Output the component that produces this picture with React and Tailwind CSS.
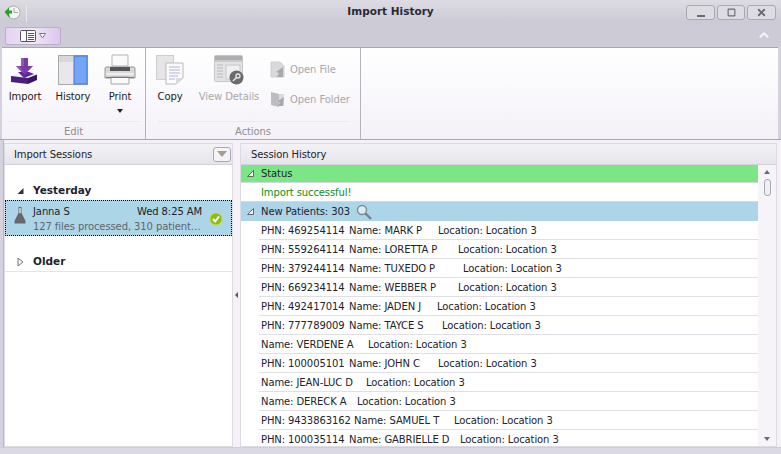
import React from 'react'
import { Square, X, ChevronUp } from 'lucide-react'

const font = { fontFamily: 'Tahoma, "DejaVu Sans", sans-serif' }

// phn column / name column widths follow the reference's uneven padding
const rows = [
  { phn: 'PHN: 469254114', name: 'Name: MARK P', nameW: 'w-[89px]' },
  { phn: 'PHN: 559264114', name: 'Name: LORETTA P', nameW: 'w-[109px]' },
  { phn: 'PHN: 379244114', name: 'Name: TUXEDO P', nameW: 'w-[114px]' },
  { phn: 'PHN: 669234114', name: 'Name: WEBBER P', nameW: 'w-[109px]' },
  { phn: 'PHN: 492417014', name: 'Name: JADEN J', nameW: 'w-[88px]' },
  { phn: 'PHN: 777789009', name: 'Name: TAYCE S', nameW: 'w-[93px]' },
  { name: 'Name: VERDENE A', nameW: 'w-[107px]' },
  { phn: 'PHN: 100005101', name: 'Name: JOHN C', nameW: 'w-[89px]' },
  { name: 'Name: JEAN-LUC D', nameW: 'w-[105px]' },
  { name: 'Name: DERECK A', nameW: 'w-[96px]' },
  { phn: 'PHN: 9433863162', phnW: 'w-[93px]', name: 'Name: SAMUEL T', nameW: 'w-[100px]' },
  { phn: 'PHN: 100035114', name: 'Name: GABRIELLE D', nameW: 'w-[111px]' },
]

function ImportIcon() {
  return (
    <svg width="30" height="28" viewBox="0 0 30 28">
      <path d="M1 19 L12 15 L29 17 L18 22 L1 21 Z" fill="#f4f0f8" />
      <path d="M1 19 L18 21 V27 L1 25 Z" fill="#4a1f80" />
      <path d="M18 21 L27 17.5 V23 L18 27 Z" fill="#3a1566" />
      <path d="M8 15 L14 21 L24 17 L19 15 Z" fill="#5b2a94" />
      <path d="M11 1 H18 V9 H23 L14.5 18 L6 9 H11 Z" fill="#7a3aa8" />
      <path d="M11 1 H14 V9 H9 L14.5 16 L6 9 H11 Z" fill="#9258bd" />
    </svg>
  )
}

function HistoryIcon() {
  return (
    <svg width="30" height="30" viewBox="0 0 30 30">
      <rect x="0.5" y="0.5" width="29" height="29" fill="#e9e7ea" stroke="#a9a9ad" />
      <rect x="1" y="1" width="14" height="6" fill="#d9d7da" />
      <rect x="16" y="1" width="13" height="28" fill="#76a5f5" stroke="#3f78e0" />
    </svg>
  )
}

function PrintIcon() {
  return (
    <svg width="32" height="31" viewBox="0 0 32 31">
      <path d="M8 1 H24 V12 H8 Z" fill="#fafafa" stroke="#b5b5b5" />
      <path d="M2 13 H30 Q31 13 31 15 V24 H1 V15 Q1 13 2 13 Z" fill="#d8d8d8" stroke="#9a9a9a" />
      <rect x="6" y="13" width="20" height="4" fill="#55565a" />
      <rect x="2" y="19" width="28" height="2" fill="#efefef" />
      <path d="M7 23 H25 V30 H7 Z" fill="#fafafa" stroke="#a5a5a5" />
      <rect x="2" y="23" width="28" height="1" fill="#77787c" />
    </svg>
  )
}

function CopyIcon() {
  return (
    <svg width="28" height="30" viewBox="0 0 28 30">
      <rect x="0.5" y="0.5" width="17" height="24" fill="#e6e4e6" stroke="#cfcdd0" />
      <path d="M10 8 H27 V23 L20 29 H10 Z" fill="#fbfbfd" stroke="#b9b9bd" />
      <path d="M13 12 H24 M13 15 H24 M13 18 H24 M13 21 H22 M13 24 H19" stroke="#aeb4d8" />
      <path d="M20 29 V23 H27 Z" fill="#dcdcdc" />
    </svg>
  )
}

function DetailsIcon() {
  return (
    <svg width="30" height="30" viewBox="0 0 30 30">
      <rect x="0.5" y="0.5" width="28" height="26" rx="1" fill="#e4e2e5" stroke="#c6c5c8" />
      <rect x="1" y="1" width="27" height="4" fill="#adadaf" />
      <rect x="1" y="5" width="27" height="2" fill="#c9c8cb" />
      <path d="M3 10 H9 M3 13 H9 M3 16 H9 M3 19 H9 M3 22 H9" stroke="#b9b8bb" />
      <rect x="12" y="10" width="14" height="14" fill="#efeef0" stroke="#c6c5c8" />
      <circle cx="22.5" cy="22.5" r="7" fill="#6b6b6e" />
      <circle cx="24" cy="21" r="2" fill="none" stroke="#e8e8e8" strokeWidth="1.3" />
      <path d="M22.5 22.5 L19 26" stroke="#e8e8e8" strokeWidth="1.5" />
    </svg>
  )
}

function OpenFileIcon() {
  return (
    <svg width="15" height="17" viewBox="0 0 15 17">
      <path d="M1 1 H10 L14 5 V16 H1 Z" fill="#d9d8da" stroke="#cfced0" />
      <path d="M13 6 L6 11 L9 12 L7 16 H13 Z" fill="#a9a8aa" />
    </svg>
  )
}

function OpenFolderIcon() {
  return (
    <svg width="15" height="17" viewBox="0 0 15 17">
      <path d="M1 1 L9 3 V16 L1 14 Z" fill="#bdbcbe" />
      <path d="M9 3 H14 V15 H9 Z" fill="#dbdadc" />
      <path d="M14 6 L8 10 L10 12 L8 15 H13 Z" fill="#a9a8aa" />
    </svg>
  )
}

function BigButton({ icon, label, disabled, caret, width }) {
  return (
    <div className={`flex flex-col items-center ${width}`}>
      <div className="h-[32px] flex items-end justify-center">{icon}</div>
      <div className={`mt-[5px] leading-[14px] whitespace-nowrap ${disabled ? 'text-[#a8a8ac]' : 'text-[#1c1c22]'}`}>{label}</div>
      {caret && <div className="mt-[5px] w-0 h-0 border-l-[3px] border-r-[3px] border-t-[4px] border-l-transparent border-r-transparent border-t-[#222]" />}
    </div>
  )
}

function Corner({ filled }) {
  return (
    <svg width="8" height="8" viewBox="0 0 8 8" className="shrink-0">
      {filled
        ? <path d="M0.5 7 H6.5 V1 Z" fill="#333" />
        : <path d="M0.5 6.5 H6.5 V0.5 Z" fill="#f4f4f4" stroke="#666" />}
    </svg>
  )
}

export default function App() {
  return (
    <div style={font} className="w-[781px] h-[454px] overflow-hidden flex flex-col text-[10px] tracking-[-0.1px] text-[#22222a] bg-[#d4d2dd]">
      {/* title bar */}
      <div className="h-[23px] grid grid-cols-[1fr_auto_1fr] items-center bg-gradient-to-b from-[#dddbe3] to-[#cbc9d4] shrink-0">
        <div className="flex items-center">
          <svg width="17" height="15" viewBox="0 0 17 15" className="ml-[4px] mt-[2px]">
            <circle cx="9.5" cy="7.5" r="6.5" fill="#f4f4f4" stroke="#a8b0a8" />
            <path d="M10 3 V7.5 H14" fill="none" stroke="#a5a5a5" />
            <path d="M0.5 7 L5 2.5 V5.5 H8 V8.5 H5 L6 13 Z" fill="#22a322" />
          </svg>
          <div className="ml-[5px] mt-[4px] w-px h-[17px] bg-[#e9e8ee]" />
        </div>
        <div className="font-bold text-[10.5px] text-[#2a2a33] tracking-normal">Import History</div>
        <div className="flex justify-end gap-[2px] mr-[5px] mt-[1px]">
          <div className="w-[29px] h-[15px] rounded-[3px] border border-[#a9a8b3] bg-[#dddce3] flex items-end justify-center pb-[2px]">
            <div className="w-[8px] h-[2px] bg-[#6a6a74]" />
          </div>
          <div className="w-[28px] h-[15px] rounded-[3px] border border-[#a9a8b3] bg-[#dddce3] flex items-center justify-center">
            <Square size={9} strokeWidth={3} className="text-[#6a6a74]" />
          </div>
          <div className="w-[29px] h-[15px] rounded-[3px] border border-[#a9a8b3] bg-[#dddce3] flex items-center justify-center">
            <X size={11} strokeWidth={4} className="text-[#6a6a74]" />
          </div>
        </div>
      </div>

      {/* tab row */}
      <div className="h-[24px] flex items-start justify-between shrink-0 bg-[#cdcbd6]">
        <div className="ml-[5px] mt-[4px] w-[56px] h-[18px] rounded-[2px] border border-[#b8afc8] bg-gradient-to-r from-[#e4d2f2] via-[#f2e8f8] to-[#dcc5ef] flex items-center justify-center gap-[2px]">
          <svg width="17" height="12" viewBox="0 0 17 12">
            <rect x="0.5" y="0.5" width="15" height="11" rx="1" fill="#fafafa" stroke="#555" />
            <path d="M6.5 1 V11 M8 3.5 H14 M8 5.5 H14 M8 7.5 H14 M8 9.5 H14" stroke="#555" />
          </svg>
          <svg width="7" height="6" viewBox="0 0 7 6"><path d="M0.5 0.5 H6.5 L3.5 5 Z" fill="#fff" stroke="#777" /></svg>
        </div>
        <ChevronUp size={14} strokeWidth={3.5} className="mt-[5px] mr-[10px] text-[#f5f5f7]" />
      </div>

      {/* ribbon */}
      <div className="h-[92px] ml-[2px] mr-[3px] flex bg-gradient-to-b from-white to-[#f4f1f8] border-t border-[#a8a7b0] shrink-0">
        <div className="w-[144px] flex flex-col border-r border-[#b5b4bc]">
          <div className="flex-1 flex pt-[5px] pl-[1px]">
            <BigButton icon={<ImportIcon />} label="Import" width="w-[44px]" />
            <BigButton icon={<HistoryIcon />} label="History" width="w-[48px] ml-[2px]" />
            <BigButton icon={<PrintIcon />} label="Print" caret width="w-[44px] ml-[1px]" />
          </div>
          <div className="h-[18px] mx-[6px] border-t border-[#ebe9ef] text-center text-[#8e8e94] leading-[19px]">Edit</div>
        </div>
        <div className="w-[215px] flex flex-col border-r border-[#b5b4bc]">
          <div className="flex-1 flex pt-[5px] pl-[2px]">
            <BigButton icon={<CopyIcon />} label="Copy" width="w-[44px]" />
            <BigButton icon={<DetailsIcon />} label="View Details" disabled width="w-[60px] ml-[7px]" />
            <div className="ml-[11px] flex flex-col gap-[12px] text-[#a8a8ac] pt-[7px]">
              <div className="flex items-center gap-[5px] h-[18px]"><OpenFileIcon />Open File</div>
              <div className="flex items-center gap-[5px] h-[18px]"><OpenFolderIcon />Open Folder</div>
            </div>
          </div>
          <div className="h-[18px] mx-[12px] border-t border-[#ebe9ef] text-center text-[#8e8e94] leading-[19px]">Actions</div>
        </div>
      </div>

      {/* body */}
      <div className="flex-1 min-h-0 flex border-t border-[#a8a7b0] pt-[3px] pr-[1px] bg-[#f5f1f6]">
        {/* window edge */}
        <div className="w-[4px] -mt-[3px] shrink-0 bg-[#d4d2dd] border-r border-[#b9b7c4]" />
        {/* left panel */}
        <div className="w-[229px] flex flex-col border border-[#dcdae2] bg-white shrink-0">
          <div className="h-[21px] flex items-center justify-between bg-gradient-to-b from-[#f3f2f6] to-[#e6e4ec] pl-[9px] pr-[1px] shrink-0 border-b border-[#d2d0d9]">
            <span>Import Sessions</span>
            <div className="w-[18px] h-[15px] rounded-[3px] border border-[#aaa9b2] bg-[#f4f3f6] flex items-center justify-center">
              <div className="w-0 h-0 border-l-[5px] border-r-[5px] border-t-[6px] border-l-transparent border-r-transparent border-t-[#a89c90]" />
            </div>
          </div>
          <div className="h-[18px] mt-[17px] flex items-center gap-[8px] pl-[12px] font-bold text-[#1f1f33] text-[10.5px] tracking-normal">
            <Corner filled />Yesterday
          </div>
          <div className="h-[36px] border border-dotted border-black bg-[#add5e8] flex items-center pl-[8px] pr-[8px]">
            <svg width="12" height="17" viewBox="0 0 12 17" className="shrink-0 mb-[6px]">
              <path d="M4.5 0 H7.5 V6 L11.5 14 V16.5 H0.5 V14 L4.5 6 Z" fill="#67676c" />
              <path d="M5 1 H7 V6 H5 Z" fill="#c0c0c4" />
            </svg>
            <div className="ml-[7px] flex-1 min-w-0 pt-[1px]">
              <div className="flex justify-between leading-[15px]"><span>Janna S</span><span>Wed 8:25 AM</span></div>
              <div className="leading-[14px] mt-[1px] text-[#62646a] whitespace-nowrap overflow-hidden">127 files processed, 310 patient…</div>
            </div>
            <svg width="14" height="14" viewBox="0 0 14 14" className="ml-[7px] mt-[1px] shrink-0">
              <circle cx="7" cy="7" r="6" fill="#8fbb14" stroke="#c3dc3a" />
              <path d="M4 7 L6.2 9.5 L10 4.5" fill="none" stroke="#fff" strokeWidth="2" />
            </svg>
          </div>
          <div className="h-[18px] mt-[17px] flex items-center gap-[9px] pl-[12px] font-bold text-[#1f1f33] text-[10.5px] tracking-normal">
            <svg width="7" height="10" viewBox="0 0 7 10" className="shrink-0"><path d="M1 1 L6 5 L1 9 Z" fill="#f6f6f6" stroke="#777" /></svg>
            Older
          </div>
          <div className="border-t border-[#e6e4ea]" />
        </div>

        {/* splitter */}
        <div className="w-[7px] shrink-0 flex items-center justify-center">
          <div className="w-0 h-0 border-t-[3px] border-b-[3px] border-r-[3px] border-t-transparent border-b-transparent border-r-[#55555c]" />
        </div>

        {/* right panel */}
        <div className="w-[537px] flex flex-col border border-[#dcdae2] bg-white shrink-0">
          <div className="h-[21px] flex items-center bg-gradient-to-b from-[#f3f2f6] to-[#e6e4ec] pl-[10px] shrink-0 border-b border-[#d2d0d9]">Session History</div>
          <div className="flex-1 min-h-0 flex">
            <div className="flex-1 min-w-0 overflow-hidden">
              <div className="h-[18px] bg-[#7be685] flex items-center gap-[6px] pl-[6px] border-b border-[#d8d6de]"><Corner />Status</div>
              <div className="h-[19px] flex items-center pl-[20px] text-[#0c9018] border-b border-[#d8d6de]">Import successful!</div>
              <div className="h-[19px] bg-[#add5e8] flex items-center pl-[6px]">
                <Corner /><span className="ml-[6px]">New Patients: 303</span>
                <svg width="16" height="16" viewBox="0 0 16 16" className="ml-[6px]">
                  <circle cx="6" cy="6" r="4.5" fill="#dcebf4" stroke="#7f8c96" strokeWidth="1.4" />
                  <path d="M9.5 9.5 L15 15" stroke="#777f88" strokeWidth="2.4" />
                </svg>
              </div>
              {rows.map((r, i) => (
                <div key={i} className="h-[19px] ml-[18px] flex items-center pl-[2px] border-b border-[#e1dfe6] whitespace-nowrap">
                  {r.phn && <span className={`shrink-0 ${r.phnW || 'w-[88px]'}`}>{r.phn}</span>}
                  <span className={`shrink-0 ${r.nameW}`}>{r.name}</span>
                  <span>Location: Location 3</span>
                </div>
              ))}
            </div>
            <div className="w-[18px] shrink-0 bg-[#f6f3f9] flex flex-col items-center">
              <div className="mt-[5px] w-0 h-0 border-l-[3px] border-r-[3px] border-b-[4px] border-l-transparent border-r-transparent border-b-[#6a6a72]" />
              <div className="mt-[5px] w-[7px] h-[17px] rounded-[3px] border border-[#a9a8b3] bg-[#f0eff4]" />
              <div className="mt-auto mb-[5px] w-0 h-0 border-l-[3px] border-r-[3px] border-t-[4px] border-l-transparent border-r-transparent border-t-[#6a6a72]" />
            </div>
          </div>
        </div>
      </div>

      {/* bottom strip */}
      <div className="h-[7px] shrink-0 bg-[#dbd9e4] border-t border-[#cfcdd8]" />
    </div>
  )
}
